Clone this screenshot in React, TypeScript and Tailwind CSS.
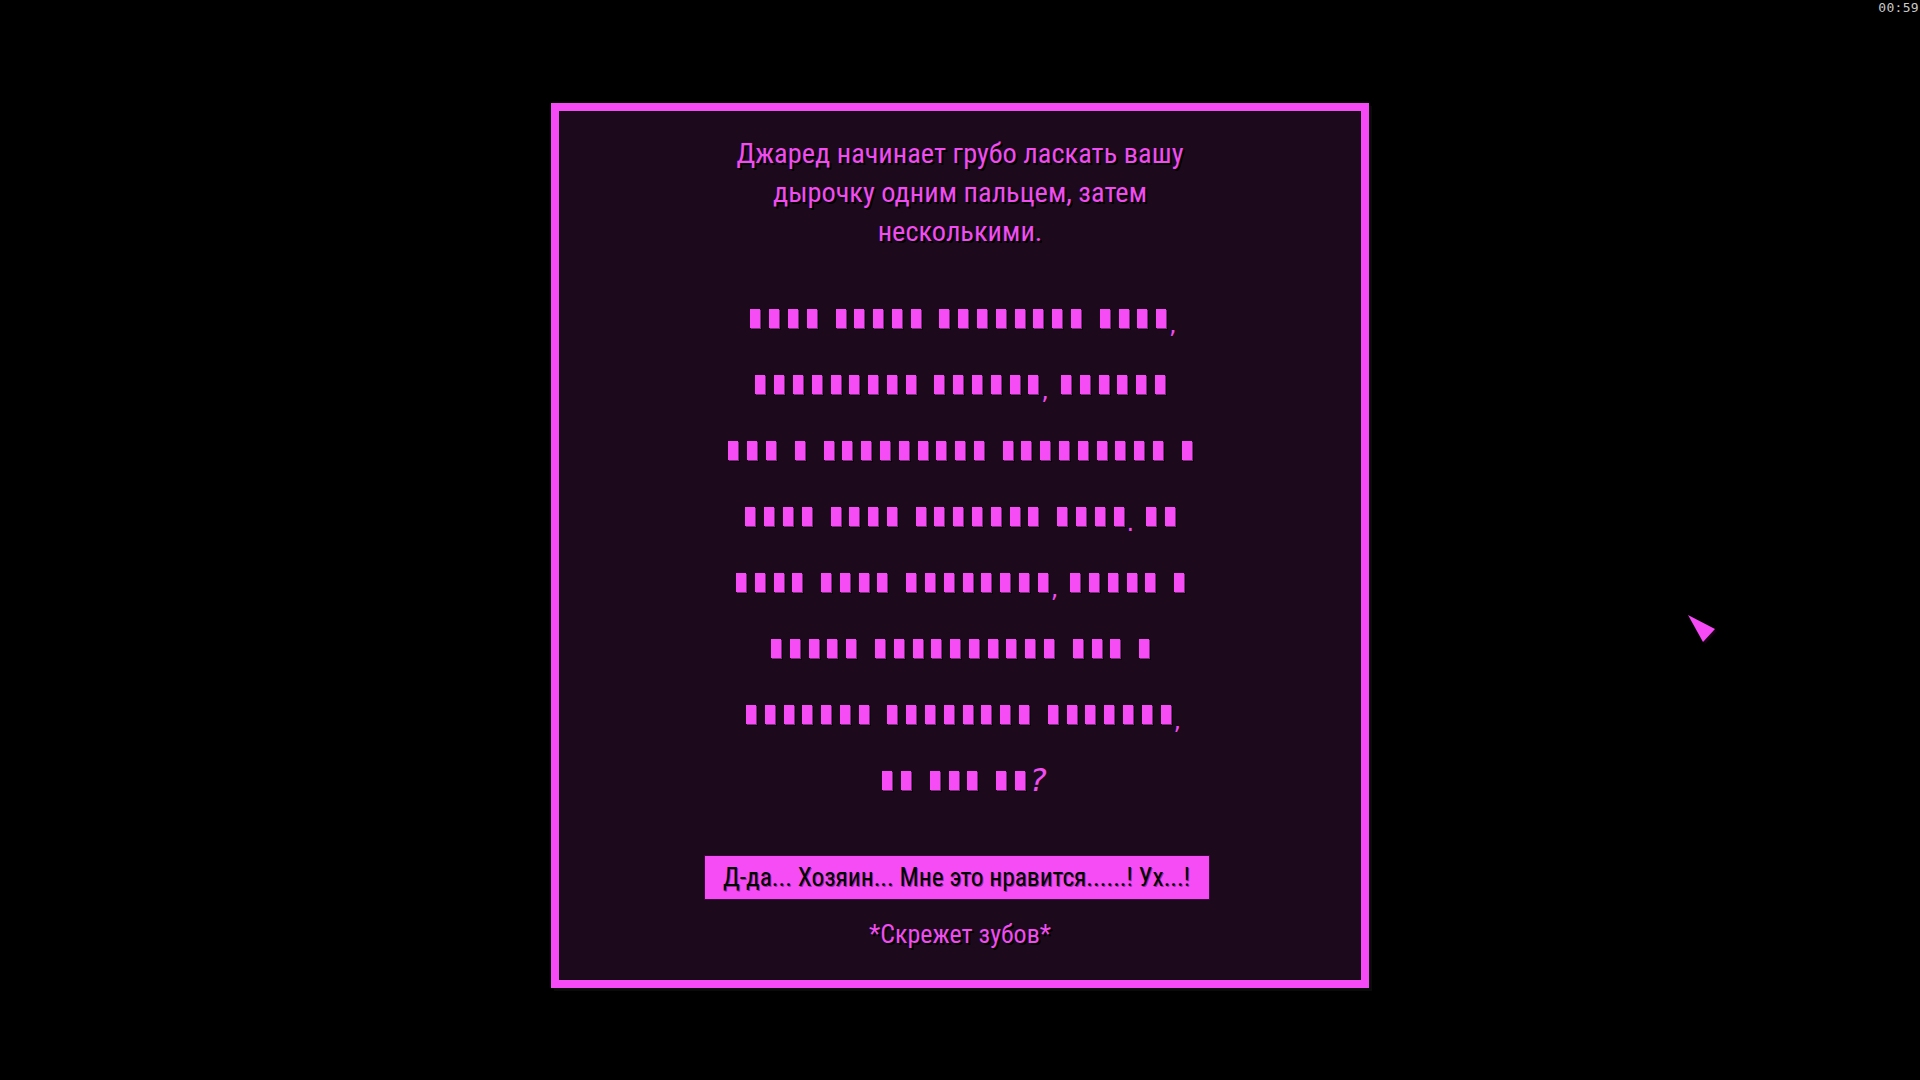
import type { ReactNode } from "react";

// censored lines: # = block, space = word gap, anything else = punctuation
const censored = [
  "#### ##### ######## ####,",
  "######### ######, ######",
  "### # ######### ######### #",
  "#### #### ####### ####. ##",
  "#### #### ########, ##### #",
  "##### ########## ### #",
  "####### ######## #######,",
  "## ### ##?",
];

function CensorLine({ text }: { text: string }) {
  const parts: ReactNode[] = [];
  text.split("").forEach((ch, i) => {
    if (ch === "#") {
      parts.push(
        <span
          key={i}
          className="inline-block w-[10px] h-[19px] mr-[8.8px] bg-[#f64cf6] shadow-[1px_1px_0_#8a238a,2px_2px_0_#050105]"
        />
      );
    } else if (ch === " ") {
      parts.push(<span key={i} className="inline-block w-[10px]" />);
    } else if (ch === "?") {
      parts.push(
        <span
          key={i}
          className="ml-[-4px] text-[32px] leading-none italic font-extralight text-[#f04cf0] font-['DejaVu_Sans',sans-serif]"
        >
          ?
        </span>
      );
    } else {
      parts.push(
        <span
          key={i}
          className="ml-[-6px] mr-[2px] mt-[14px] text-[24px] leading-none text-[#f04cf0] font-['DejaVu_Sans',sans-serif]"
        >
          {ch}
        </span>
      );
    }
  });
  return <div className="h-[66px] pl-[9px] flex items-center justify-center">{parts}</div>;
}

function Cursor() {
  return (
    <svg className="absolute left-[1684px] top-[612px]" width="36" height="36" viewBox="0 0 36 36">
      <polygon points="5,4 32,18 20,31" fill="#1a0014" transform="translate(1 1)" />
      <polygon points="4,3 31,17 19,30" fill="#f54af5" />
    </svg>
  );
}

export default function App() {
  const font = "font-['Roboto_Condensed','Liberation_Sans_Narrow',sans-serif]";
  return (
    <div className="relative w-[1920px] h-[1080px] bg-black flex justify-center pt-[103px] overflow-hidden">
      <div className="absolute top-[1px] right-[1px] text-[13px] leading-none tracking-[0.3px] text-[#c9c9c9] font-['DejaVu_Sans_Mono',monospace]">
        00:59
      </div>

      <div className="w-[818px] h-[885px] border-8 border-[#f54af5] bg-[#1c0a1c] shadow-[inset_0_0_0_1px_#0c030c,3px_3px_0_#0a0a0a] flex flex-col items-center">
        <p
          className={`${font} mt-[23px] text-[28.4px] leading-[39px] text-center text-[#f04cf0] [text-shadow:2px_2px_0_#000]`}
        >
          Джаред начинает грубо ласкать вашу
          <br />
          дырочку одним пальцем, затем
          <br />
          несколькими.
        </p>

        <div className="mt-[34px] w-full">
          {censored.map((line, i) => (
            <CensorLine key={i} text={line} />
          ))}
        </div>

        <button
          className={`${font} mt-[42px] mr-[7px] w-[506px] h-[45px] bg-[#f64cf6] border border-[#3a0a3a] text-[25.4px] leading-none whitespace-nowrap font-normal text-black [text-shadow:1px_1px_0_#9a2a9a]`}
        >
          Д-да... Хозяин... Мне это нравится......! Ух...!
        </button>

        <p
          className={`${font} mt-[15px] text-[26px] leading-[39px] text-[#f04cf0] [text-shadow:2px_2px_0_#000]`}
        >
          *Скрежет зубов*
        </p>
      </div>

      <Cursor />
    </div>
  );
}
